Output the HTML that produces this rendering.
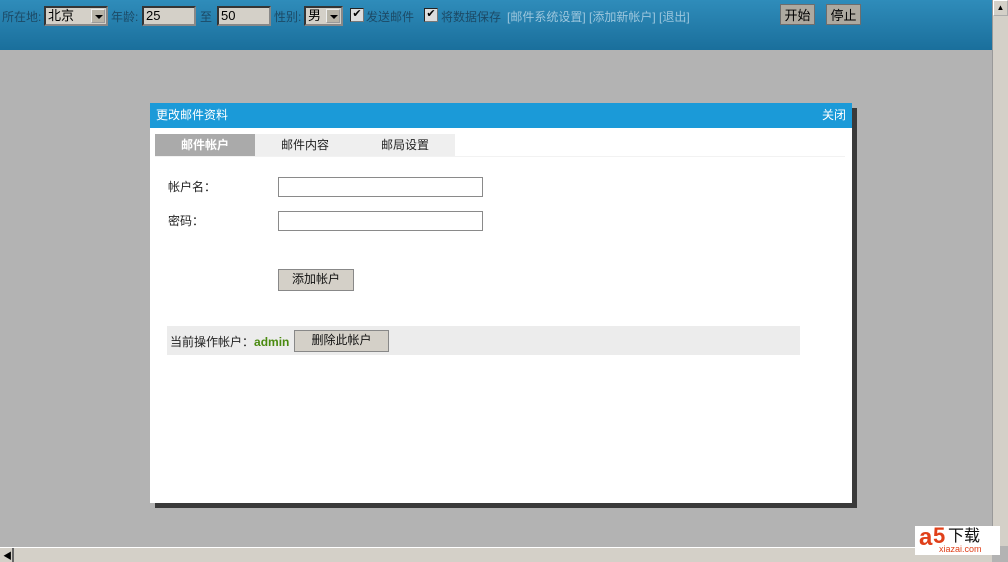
<!DOCTYPE html>
<html><head><meta charset="utf-8"><style>
*{margin:0;padding:0;box-sizing:border-box}
body{width:1008px;height:562px;overflow:hidden;background:#b3b3b3;position:relative;font-family:"Liberation Sans","Noto Sans CJK SC",sans-serif;font-size:12px}
.top{position:absolute;left:0;top:0;width:992px;height:50px;background:linear-gradient(#2f8cba,#1a6f9c)}
.t{position:absolute;top:9px;font-size:12px;color:#1c4a66;line-height:16px}
.l{color:#9cc6dd}
.sel,.inp{position:absolute;top:6px;height:20px;background:#d4d0c8;border:2px inset #888;font-size:13px;line-height:15px;padding-left:2px;color:#000}
.arr{position:absolute;right:1px;top:1px;width:14px;height:14px;background:#b8b4a8;border:1px outset #eee}
.arr:after{content:"";position:absolute;left:3px;top:5px;border:4px solid transparent;border-top:4px solid #000;border-bottom:0}
.cb{position:absolute;top:8px;width:14px;height:14px;background:#ddd;border:1px inset #777;font-size:11px;line-height:11px;text-align:center;color:#000}
.btn{position:absolute;background:#ada9a0;border:1px solid #6d6d6d;font-size:13px;text-align:center;color:#000}
.vs{position:absolute;left:992px;top:0;width:16px;height:546px;background:#d4d0c8;border-left:1px solid #999}
.hs{position:absolute;left:0;top:547px;width:992px;height:15px;background:#d4d0c8;border-top:1px solid #fff}
.dlg{position:absolute;left:150px;top:103px;width:702px;height:400px;background:#fff;box-shadow:5px 5px 0 #3a3a3a}
.hd{height:25px;background:#1b9ad8;color:#fff;font-size:12px;line-height:24px;padding:0 6px}
.tab{position:absolute;top:31px;height:22px;width:100px;text-align:center;line-height:22px;background:#efefef;color:#222;font-size:12px}
.fi{position:absolute;left:128px;width:205px;height:20px;border:1px solid #8a8a8a;background:#fff}
.lb{position:absolute;left:18px;font-size:12px;color:#222}
.gb{position:absolute;background:#d4d0c8;border:1px solid #888;font-size:12px;text-align:center;color:#111}
</style></head><body>
<div class="top">
<span class="t" style="left:2px">所在地:</span>
<div class="sel" style="left:44px;width:64px">北京<div class="arr"></div></div>
<span class="t" style="left:111px">年龄:</span>
<div class="inp" style="left:142px;width:54px">25</div>
<span class="t" style="left:200px">至</span>
<div class="inp" style="left:217px;width:54px">50</div>
<span class="t" style="left:274px">性别:</span>
<div class="sel" style="left:304px;width:39px">男<div class="arr"></div></div>
<div class="cb" style="left:350px">✔</div><span class="t" style="left:366px">发送邮件</span>
<div class="cb" style="left:424px">✔</div><span class="t" style="left:441px">将数据保存</span>
<span class="t l" style="left:507px">[邮件系统设置] [添加新帐户] [退出]</span>
<div class="btn" style="left:780px;top:4px;width:35px;height:21px">开始</div>
<div class="btn" style="left:826px;top:4px;width:35px;height:21px">停止</div>
</div>
<div class="vs"><div style="height:16px;border:1px outset #fff;text-align:center;font-size:8px;line-height:14px">▲</div></div>
<div class="hs"><span style="position:absolute;left:3px;top:1px;font-size:9px">◀</span><div style="position:absolute;left:12px;top:0;width:2px;height:14px;background:#666"></div></div>
<div class="dlg">
<div class="hd">更改邮件资料<span style="float:right">关闭</span></div>
<div style="position:absolute;left:5px;top:53px;width:690px;height:1px;background:#f2f2f2"></div>
<div class="tab" style="left:5px;background:#aaa;color:#fff;font-weight:bold">邮件帐户</div>
<div class="tab" style="left:105px">邮件内容</div>
<div class="tab" style="left:205px">邮局设置</div>
<span class="lb" style="top:75px">帐户名：</span>
<div class="fi" style="top:74px"></div>
<span class="lb" style="top:109px">密码：</span>
<div class="fi" style="top:108px"></div>
<div class="gb" style="left:128px;top:166px;width:76px;height:22px;line-height:19px">添加帐户</div>
<div style="position:absolute;left:17px;top:223px;width:633px;height:29px;background:#ececec">
<span style="position:absolute;left:3px;top:7px;color:#222">当前操作帐户：<b style="color:#4a8a10">admin</b></span>
<div class="gb" style="left:127px;top:4px;width:95px;height:22px;line-height:18px">删除此帐户</div>
</div>
</div>
<div style="position:absolute;left:915px;top:526px;width:85px;height:29px;background:#fff">
<span style="position:absolute;left:4px;top:-2px;font:bold 24px 'Liberation Sans',sans-serif;color:#e0401a">a</span>
<span style="position:absolute;left:18px;top:-3px;font:bold 22px 'Liberation Sans',sans-serif;color:#e0401a">5</span>
<span style="position:absolute;left:33px;top:3px;font-size:16px;line-height:16px;color:#111">下载</span>
<span style="position:absolute;left:24px;top:19px;font-size:9px;line-height:9px;color:#e0401a">xiazai.com</span>
</div>
</body></html>
